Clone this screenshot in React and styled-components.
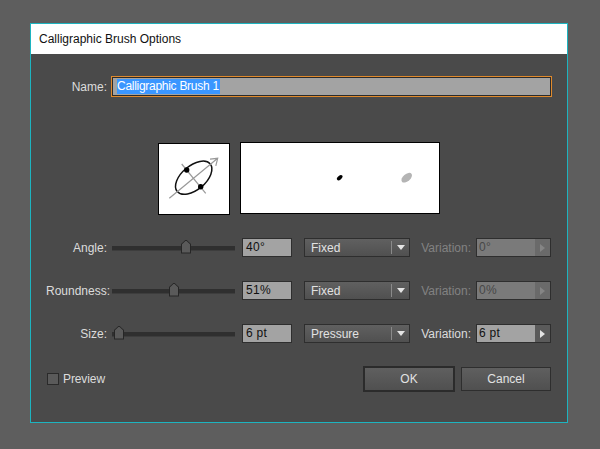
import styled, { createGlobalStyle } from "styled-components";

const rows = [
	{ label: "Angle:", thumb: 74, value: "40°", mode: "Fixed", variation: "0°", disabled: true },
	{ label: "Roundness:", thumb: 62, value: "51%", mode: "Fixed", variation: "0%", disabled: true },
	{ label: "Size:", thumb: 7, value: "6 pt", mode: "Pressure", variation: "6 pt", disabled: false },
];

const GlobalStyle = createGlobalStyle`
	html, body {
		margin: 0;
		background: #5e5e5e;
		font-family: "Liberation Sans", Arial, sans-serif;
		font-size: 12px;
	}
`;

const Page = styled.div`
	width: 600px;
	height: 449px;
	padding: 23px 0 0 30px;
	box-sizing: border-box;
	overflow: hidden;
`;

const Dialog = styled.div`
	width: 538px;
	height: 400px;
	box-sizing: border-box;
	border: 1px solid #1db4c0;
	background: #4a4a4a;
	display: flex;
	flex-direction: column;
`;

const TitleBar = styled.div`
	height: 30px;
	flex: none;
	background: #fff;
	color: #111;
	display: flex;
	align-items: center;
	padding-left: 8px;
`;

const Body = styled.div`
	flex: 1;
	display: flex;
	flex-direction: column;
	padding: 22px 16px 0 15px;
`;

const Label = styled.div`
	width: 61px;
	flex: none;
	text-align: right;
	white-space: nowrap;
	color: ${(p) => (p.$dim ? "#828282" : "#dcdcdc")};
`;

const NameRow = styled.div`
	display: flex;
	align-items: center;
	gap: 4px;
	height: 21px;
`;

const NameInput = styled.div`
	width: 441px;
	height: 21px;
	flex: none;
	box-sizing: border-box;
	border: 1px solid #e08a2c;
	box-shadow: inset 0 0 0 1px #2b2b2b;
	background: #a3a3a3;
	padding: 2px 0 0 5px;
	line-height: 15px;
`;

const Selected = styled.span`
	display: inline-block;
	background: #3a96ff;
	color: #fff;
	height: 15px;
	padding-right: 1px;
	letter-spacing: -0.28px;
`;

const Previews = styled.div`
	display: flex;
	gap: 10px;
	margin: 45px 0 0 112px;
	height: 73px;
`;

const TipBox = styled.div`
	width: 72px;
	height: 72px;
	margin-top: 1px;
	box-sizing: border-box;
	border: 1px solid #000;
	background: #fff;
	display: flex;

	& svg {
		display: block;
	}
`;

const StrokeBox = styled.div`
	width: 200px;
	height: 72px;
	box-sizing: border-box;
	border: 1px solid #000;
	background: #fff;
	display: flex;

	& svg {
		display: block;
	}
`;

const Settings = styled.div`
	display: flex;
	flex-direction: column;
	gap: 24px;
	margin-top: 23px;
`;

const Row = styled.div`
	display: flex;
	align-items: center;
	height: 19px;
`;

const Slider = styled.div`
	position: relative;
	width: 123px;
	height: 4px;
	flex: none;
	margin: 0 7px 0 5px;
	background: #2f2f2f;
	box-shadow: 0 1px 0 #3d3d3d;
`;

const Thumb = styled.div`
	position: absolute;
	top: -6px;
	left: ${(p) => p.$at - 5}px;
	width: 10px;
	height: 14px;
	background: #262626;
	clip-path: polygon(50% 0, 100% 32%, 100% 100%, 0 100%, 0 32%);

	&::after {
		content: "";
		position: absolute;
		inset: 1px;
		background: #5a5a5a;
		clip-path: polygon(50% 0, 100% 32%, 100% 100%, 0 100%, 0 32%);
	}
`;

const Field = styled.div`
	width: 50px;
	height: 19px;
	flex: none;
	box-sizing: border-box;
	border: 1px solid #2e2e2e;
	background: #a3a3a3;
	color: #111;
	padding-left: 3px;
	line-height: 17px;
	letter-spacing: 0.3px;
`;

const Select = styled.div`
	width: 106px;
	height: 19px;
	flex: none;
	margin-left: 12px;
	box-sizing: border-box;
	border: 1px solid #2e2e2e;
	background: linear-gradient(#606060, #505050);
	color: #e2e2e2;
	display: flex;
	align-items: center;
	justify-content: space-between;
	padding-left: 6px;
`;

const SelectArrow = styled.div`
	width: 18px;
	height: 13px;
	box-sizing: border-box;
	border-left: 1px solid #8a8a8a;
	display: flex;
	align-items: center;
	justify-content: center;

	&::after {
		content: "";
		border-left: 4px solid transparent;
		border-right: 4px solid transparent;
		border-top: 5px solid #e4e4e4;
	}
`;

const VariationLabel = styled(Label)`
	margin-right: 5px;
`;

const Stepper = styled.div`
	width: 75px;
	height: 19px;
	flex: none;
	box-sizing: border-box;
	border: 1px solid #2e2e2e;
	display: flex;
	background: ${(p) => (p.$dim ? "#6a6a6a" : "#5a5a5a")};
`;

const StepperValue = styled.div`
	flex: 1;
	background: ${(p) => (p.$dim ? "#7a7a7a" : "#a3a3a3")};
	color: ${(p) => (p.$dim ? "#474747" : "#111")};
	padding-left: 2px;
	line-height: 17px;
	letter-spacing: 0.3px;
`;

const StepperArrow = styled.div`
	width: 15px;
	flex: none;
	display: flex;
	align-items: center;
	justify-content: center;

	&::after {
		content: "";
		border-top: 4px solid transparent;
		border-bottom: 4px solid transparent;
		border-left: 5px solid ${(p) => (p.$dim ? "#858585" : "#e4e4e4")};
	}
`;

const Footer = styled.div`
	display: flex;
	align-items: center;
	margin-top: 23px;
`;

const Check = styled.label`
	display: flex;
	align-items: center;
	gap: 4px;
	margin-left: 1px;
	color: #dcdcdc;
	letter-spacing: -0.1px;
`;

const CheckBox = styled.span`
	width: 12px;
	height: 12px;
	box-sizing: border-box;
	border: 1px solid #2a2a2a;
	background: #5a5a5a;
`;

const Buttons = styled.div`
	display: flex;
	align-items: center;
	gap: 6px;
	margin-left: auto;
`;

const Button = styled.div`
	box-sizing: border-box;
	width: ${(p) => (p.$primary ? "92px" : "90px")};
	height: ${(p) => (p.$primary ? "26px" : "24px")};
	border: ${(p) => (p.$primary ? "2px solid #2b2b2b" : "1px solid #2e2e2e")};
	background: linear-gradient(#5f5f5f, #505050);
	color: #e2e2e2;
	display: flex;
	align-items: center;
	justify-content: center;
`;

function TipIcon() {
	return (
		<svg width="70" height="70" viewBox="0 0 70 70">
			<g transform="translate(-1 -1)">
				<path d="M23.7 21L47.7 50.3" stroke="#999" strokeWidth="1.2" />
				<ellipse cx="35.7" cy="34.7" rx="21.5" ry="12" fill="none" stroke="#111" strokeWidth="1.5" transform="rotate(-40 35.7 34.7)" />
				<path d="M11.3 55.3L59.7 15.3M52 16.2L59.7 15.3L57.8 22.8" fill="none" stroke="#999" strokeWidth="1.2" />
				<circle cx="28.7" cy="27" r="2.7" fill="#000" />
				<circle cx="42.7" cy="43.7" r="2.7" fill="#000" />
			</g>
		</svg>
	);
}

function StrokeIcon() {
	return (
		<svg width="198" height="70" viewBox="0 0 198 70">
			<ellipse cx="98.7" cy="34.7" rx="3.3" ry="1.9" fill="#000" transform="rotate(-40 98.7 34.7)" />
			<ellipse cx="165.7" cy="34.7" rx="6.2" ry="3.6" fill="#b4b4b4" transform="rotate(-40 165.7 34.7)" />
		</svg>
	);
}

function App() {
	return (
		<Page>
			<GlobalStyle />
			<Dialog>
				<TitleBar>Calligraphic Brush Options</TitleBar>
				<Body>
					<NameRow>
						<Label>Name:</Label>
						<NameInput>
							<Selected>Calligraphic Brush 1</Selected>
						</NameInput>
					</NameRow>
					<Previews>
						<TipBox>
							<TipIcon />
						</TipBox>
						<StrokeBox>
							<StrokeIcon />
						</StrokeBox>
					</Previews>
					<Settings>
						{rows.map((row) => (
							<Row key={row.label}>
								<Label>{row.label}</Label>
								<Slider>
									<Thumb $at={row.thumb} />
								</Slider>
								<Field>{row.value}</Field>
								<Select>
									{row.mode}
									<SelectArrow />
								</Select>
								<VariationLabel $dim={row.disabled}>Variation:</VariationLabel>
								<Stepper $dim={row.disabled}>
									<StepperValue $dim={row.disabled}>{row.variation}</StepperValue>
									<StepperArrow $dim={row.disabled} />
								</Stepper>
							</Row>
						))}
					</Settings>
					<Footer>
						<Check>
							<CheckBox />
							Preview
						</Check>
						<Buttons>
							<Button $primary>OK</Button>
							<Button>Cancel</Button>
						</Buttons>
					</Footer>
				</Body>
			</Dialog>
		</Page>
	);
}

export default App;
